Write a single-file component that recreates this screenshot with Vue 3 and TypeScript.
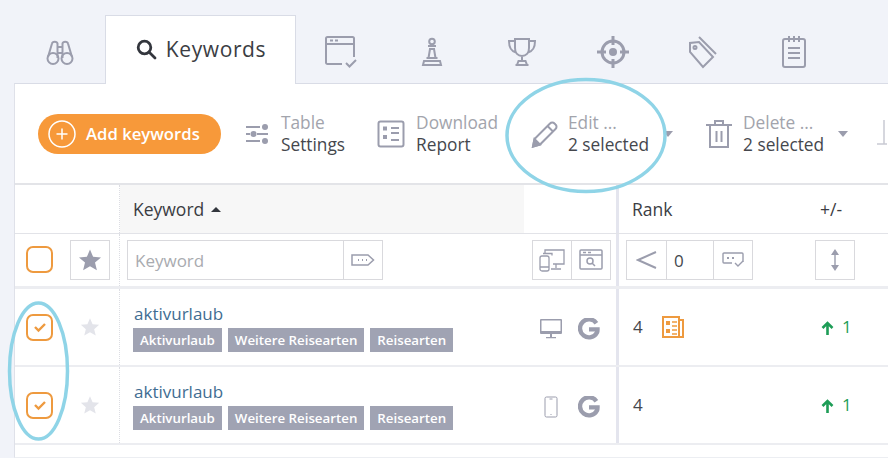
<template>
  <div class="page">
    <nav class="tabs">
      <span class="tab">
        <svg width="30" height="28" viewBox="0 0 30 28" fill="none" class="ic"><circle cx="8" cy="20.500" r="5.500"/><circle cx="22" cy="20.500" r="5.500"/><path d="M3 19 7 5.500C7.500 3 12 3 12.500 5.500V20M27 19 23 5.500C22.500 3 18 3 17.500 5.500V20M12.500 9h5M12.500 15h5"/></svg>
      </span>
      <span class="tab tab-active">
        <svg width="22" height="22" viewBox="0 0 22 22" fill="none" stroke="#33363d" stroke-width="2.800"><circle cx="9.500" cy="9.500" r="6.300"/><path d="m14 14 6 6" stroke-linecap="round"/></svg>
        Keywords
      </span>
      <span class="tab">
        <svg width="34" height="32" viewBox="0 0 34 32" fill="none" class="ic"><path d="M18 28H3.500A1.500 1.500 0 0 1 2 26.500V2.500A1.500 1.500 0 0 1 3.500 1h25A1.500 1.500 0 0 1 30 2.500V21M2 8h28M6 4.500h3M11 4.500h3"/><path d="m22 27 3.500 3.500L32 24"/></svg>
      </span>
      <span class="tab">
        <svg width="22" height="30" viewBox="0 0 22 30" fill="none" class="ic"><circle cx="11" cy="4.500" r="2.800"/><path d="M7 9h8M8 12h6M9 12l-1.500 9M13 12l1.500 9M5.500 21h11M3 24h16l1 4H2z"/></svg>
      </span>
      <span class="tab">
        <svg width="28" height="28" viewBox="0 0 28 28" fill="none" class="ic"><path d="M7 1h14v9c0 5-3 8-7 8s-7-3-7-8zM7 3H1c0 7 2 10 7 11.500M21 3h6c0 7-2 10-7 11.500M14 18v5M9 27l1.500-4h7L19 27zM7.500 27h13"/></svg>
      </span>
      <span class="tab">
        <svg width="34" height="34" viewBox="0 0 34 34" fill="none" class="ic ic-bold"><circle cx="17" cy="17" r="11"/><path d="M17 1v9M17 24v9M1 17h9M24 17h9"/><circle cx="17" cy="17" r="4" fill="#9b9dad" stroke="none"/></svg>
      </span>
      <span class="tab">
        <svg width="30" height="34" viewBox="0 0 30 34" fill="none" class="ic"><path d="M2 8v9l13 15 10-10L11 7zM11 2l17 17"/><circle cx="7" cy="12.500" r="1.500"/></svg>
      </span>
      <span class="tab">
        <svg width="26" height="34" viewBox="0 0 26 34" fill="none" class="ic"><path d="M4 4h18a2 2 0 0 1 2 2v24a2 2 0 0 1-2 2H4a2 2 0 0 1-2-2V6a2 2 0 0 1 2-2zM8 1v6M13 1v6M18 1v6M7 13h12M7 18h12M7 23h12"/></svg>
      </span>
    </nav>

    <main class="panel">
      <div class="toolbar">
        <button class="add-btn">
          <svg width="28" height="28" viewBox="0 0 28 28" fill="none" stroke="#fff" stroke-width="1.500"><circle cx="14" cy="14" r="13"/><path d="M14 8.500v11M8.500 14h11"/></svg>
          Add keywords
        </button>
        <div class="tool tool-table">
          <svg width="24" height="22" viewBox="0 0 24 22" fill="none" stroke="#9b9dad" stroke-width="2"><path d="M1 4h14M1 11h4M12 11h11M1 18h14"/><circle cx="20" cy="4" r="3" fill="#9b9dad" stroke="none"/><circle cx="8.500" cy="11" r="3" fill="#9b9dad" stroke="none"/><circle cx="20" cy="18" r="3" fill="#9b9dad" stroke="none"/></svg>
          <div class="tool-text"><span>Table</span><span>Settings</span></div>
        </div>
        <div class="tool tool-report">
          <svg width="28" height="28" viewBox="0 0 28 28" fill="none" stroke="#9b9dad" stroke-width="2"><rect x="1.500" y="1.500" width="25" height="25" rx="2"/><path d="M14 8h8M14 13h8M14 20h8"/><path d="M6 6.500h4v4H6zM6 15h4v4H6z" fill="#9b9dad" stroke="none"/></svg>
          <div class="tool-text"><span>Download</span><span>Report</span></div>
        </div>
        <div class="tool tool-edit">
          <svg width="28" height="28" viewBox="0 0 28 28" fill="none" stroke="#9b9dad" stroke-width="2"><path d="M2 26.500 3.500 19 19 3.500a3 3 0 0 1 4.500 0l1 1a3 3 0 0 1 0 4.500L9 24.500z"/><path d="m16.500 6 5.500 5.500"/><path d="M2 26.500 3.500 19l5.500 5.500z" fill="#9b9dad"/></svg>
          <div class="tool-text"><span>Edit ...</span><span>2 selected</span></div>
          <i class="caret caret-edit"></i>
        </div>
        <div class="tool tool-delete">
          <svg width="26" height="30" viewBox="0 0 26 30" fill="none" stroke="#9b9dad" stroke-width="2"><path d="M0 6h26M9 5V2h8v3M4 7v21h18V7M10.500 12v11M15.500 12v11"/></svg>
          <div class="tool-text"><span>Delete ...</span><span>2 selected</span></div>
          <i class="caret"></i>
        </div>
        <svg class="tool-next" width="10" height="28" viewBox="0 0 10 28" fill="none" stroke="#c9cad3" stroke-width="1.500"><path d="M7 0v24M0 24h10"/></svg>
      </div>

      <div class="row row-head">
        <div class="col-check"></div>
        <div class="col-keyword">
          <div class="head-sorted">Keyword <i class="sort-up"></i></div>
        </div>
        <div class="col-rank">Rank</div>
        <div class="col-change">+/-</div>
      </div>

      <div class="row row-filter">
        <div class="col-check">
          <span class="check"></span>
          <span class="box star-box">
            <svg width="24" height="24" viewBox="0 0 24 24"><path :d="STAR" fill="#9b9dad"/></svg>
          </span>
        </div>
        <div class="col-keyword">
          <input class="kw-input" placeholder="Keyword" />
          <span class="box tag-box">
            <svg width="24" height="14" viewBox="0 0 24 14" fill="none" stroke="#9b9dad" stroke-width="1.500"><path d="M1 2h16l5.500 5-5.500 5H1z"/><path d="M7 7h1M11 7h1M15 7h1" stroke-width="2"/></svg>
          </span>
          <span class="filter-right">
            <span class="box">
              <svg width="26" height="24" viewBox="0 0 26 24" fill="none" stroke="#9b9dad" stroke-width="1.300"><path d="M6 5V2h19v14H14M17 16v4M12 21h10"/><rect x="1" y="8" width="9" height="15" rx="2"/><path d="M4 5.500h9v2M1 19h9"/></svg>
            </span>
            <span class="box box-join">
              <svg width="24" height="22" viewBox="0 0 24 22" fill="none" stroke="#9b9dad" stroke-width="1.500"><rect x="1" y="1" width="22" height="19" rx="1"/><path d="M1 6h22M4 3.500h3M9 3.500h3"/><circle cx="11" cy="12" r="3"/><path d="m13 14 3 3"/></svg>
            </span>
          </span>
        </div>
        <div class="col-rank">
          <span class="box box-lt">
            <svg width="22" height="18" viewBox="0 0 22 18" fill="none" stroke="#9b9dad" stroke-width="2"><path d="M20 1 2 9l18 8"/></svg>
          </span>
          <span class="box box-num">0</span>
          <span class="box box-save">
            <svg width="22" height="16" viewBox="0 0 22 16" fill="none" stroke="#9b9dad" stroke-width="1.400"><path d="M10 11H2a1 1 0 0 1-1-1V2a1 1 0 0 1 1-1h18a1 1 0 0 1 1 1v8"/><path d="M5 6h2M10 6h2" stroke-width="2.200"/><path d="m13 11 3 3 5-5"/></svg>
          </span>
        </div>
        <div class="col-change">
          <span class="box">
            <svg width="10" height="22" viewBox="0 0 10 22" fill="#9b9dad"><path d="M5 0 9 6H1zM5 22 1 16h8zM4.300 5h1.400v12H4.300z"/></svg>
          </span>
        </div>
      </div>

      <div v-for="r in rows" :key="r.device" class="row row-data">
        <div class="col-check">
          <span class="check">
            <svg width="14" height="12" viewBox="0 0 14 12" fill="none" stroke="#ee9a3f" stroke-width="2.400"><path d="m2 6 3.500 3.500L12 3"/></svg>
          </span>
          <svg class="star" width="20" height="20" viewBox="0 0 24 24"><path :d="STAR" fill="#e3e4ea"/></svg>
        </div>
        <div class="col-keyword kw-cell">
          <div class="kw-main">
            <a class="kw-link">{{ r.keyword }}</a>
            <div class="tags"><span v-for="t in tags" :key="t" class="tag">{{ t }}</span></div>
          </div>
          <div class="kw-icons">
            <span class="device">
              <svg v-if="r.device === 'desktop'" width="22" height="20" viewBox="0 0 22 20" fill="#9b9dad"><path d="M1 0h20a1 1 0 0 1 1 1v13a1 1 0 0 1-1 1H1a1 1 0 0 1-1-1V1a1 1 0 0 1 1-1zm.500 1.500V12h19V1.500zM10 15h2v3h-2zM6 18h10v1.200H6z"/></svg>
              <svg v-else width="14" height="22" viewBox="0 0 14 22" fill="none" stroke="#9b9dad" stroke-width="1"><rect x="1" y="1" width="12" height="20" rx="1.500"/><path d="M5.500 3h3M6.500 18.500h1"/></svg>
            </span>
            <svg width="22" height="22" viewBox="0 0 22 22" fill="none" stroke="#9b9dad" stroke-width="4.400"><path d="M18.400 5.200A9 9 0 1 0 19 14.500c.3-.8.500-1.600.500-3.100H11"/></svg>
          </div>
        </div>
        <div class="col-rank rank-cell">
          <span>4</span>
          <svg v-if="r.serp" class="serp" width="22" height="22" viewBox="0 0 22 22" fill="none" stroke="#ee9a3f" stroke-width="2"><path d="M1 1h16v20H1zM17 4h4v17H3"/><path d="M4 5h4v4H4zM4 13h4v4H4z" fill="#ee9a3f" stroke="none"/><path d="M10 6h5M10 10h5M10 14h5M10 18h5" stroke-width="1.600"/></svg>
        </div>
        <div class="col-change change-cell">
          <svg width="13" height="14" viewBox="0 0 13 14" fill="none" stroke="#1e9d57" stroke-width="2.600"><path d="M1.500 7l5-5 5 5M6.500 2v12"/></svg>
          <span>1</span>
        </div>
      </div>
    </main>

    <!-- Hand-drawn highlight circles sit above the table -->
    <svg class="marks" width="888" height="458" viewBox="0 0 888 458" fill="none" stroke="#8fd4e7" stroke-width="3.500">
      <ellipse cx="586" cy="135.500" rx="79" ry="56"/>
      <ellipse cx="38.500" cy="371" rx="29" ry="68"/>
    </svg>
  </div>
</template>

<script setup lang="ts">
interface KeywordRow {
  keyword: string
  device: 'desktop' | 'mobile'
  serp: boolean
}

const STAR = 'M12 1.500l3.100 7.300 7.900.6-6 5.200 1.900 7.700L12 18.200l-6.900 4.100L7 14.600 1 9.400l7.900-.6z'

const tags = ['Aktivurlaub', 'Weitere Reisearten', 'Reisearten']

const rows: KeywordRow[] = [
  { keyword: 'aktivurlaub', device: 'desktop', serp: true },
  { keyword: 'aktivurlaub', device: 'mobile', serp: false },
]
</script>

<style>
body {
  background: #f1f3f9;
}
</style>

<style scoped>
.page {
  position: relative;
  width: 888px;
  height: 458px;
  overflow: hidden;
  background: #f1f3f9;
  font-family: 'Open Sans', sans-serif;
  color: #45474d;
}

/* tabs */
.tabs {
  display: flex;
  align-items: flex-end;
  height: 83px;
  padding-left: 14.500px;
}

.tab {
  flex: 0 0 90.500px;
  height: 68px;
  display: flex;
  align-items: center;
  justify-content: center;
  padding-top: 5px;
  box-sizing: border-box;
}

.tab-active {
  flex-basis: 191px;
  gap: 9px;
  background: #fff;
  border: 1px solid #d9dce6;
  border-bottom: 0;
  padding: 0 0 3px;
  font-size: 21px;
  letter-spacing: 0.6px;
  color: #3b3d43;
  position: relative;
  z-index: 1;
  height: 69px;
  margin-bottom: -1px;
}

.ic {
  stroke: #9b9dad;
  stroke-width: 2;
}

.ic-bold {
  stroke-width: 3;
}

/* panel */
.panel {
  margin-left: 14px;
  background: #fff;
  border-top: 1px solid #d9dce6;
  border-left: 1px solid #dfe1e9;
  border-bottom: 1px solid #eceef2;
  height: 375px;
  box-sizing: border-box;
}

.toolbar {
  display: flex;
  align-items: center;
  height: 101px;
  padding-left: 23px;
  border-bottom: 2px solid #e3e4e8;
  box-sizing: border-box;
  white-space: nowrap;
}

.add-btn {
  flex: none;
  display: flex;
  align-items: center;
  gap: 10px;
  width: 183px;
  height: 40px;
  padding: 0 0 0 10px;
  border: 0;
  border-radius: 20px;
  background: #f7993a;
  color: #fff;
  font: 600 16.700px 'Open Sans', sans-serif;
}

.tool {
  flex: none;
  display: flex;
  align-items: center;
}

.tool-table {
  margin-left: 24px;
  gap: 12px;
}

.tool-report {
  margin-left: 32px;
  gap: 11px;
}

.tool-edit {
  margin-left: 33px;
  gap: 9px;
}

.tool-delete {
  margin-left: 33px;
  gap: 11px;
}

.tool-text {
  display: flex;
  flex-direction: column;
  font-size: 17.300px;
  line-height: 22px;
}

.tool-text span:first-child {
  color: #a2a4ac;
}

.caret {
  width: 0;
  height: 0;
  margin-left: 3px;
  border: 5px solid transparent;
  border-top: 6px solid #9b9dad;
  border-bottom: 0;
}

.caret-edit {
  margin-left: 5px;
}

.tool-next {
  flex: none;
  margin-left: 29px;
}

/* table */
.row {
  display: flex;
  box-sizing: border-box;
}

.row-head {
  height: 49px;
  border-bottom: 1px solid #e2e3e8;
  font-size: 17.500px;
  color: #3b3d43;
}

.row-filter {
  height: 55px;
  border-bottom: 3px solid #ecedf1;
}

.row-data {
  height: 78px;
  border-bottom: 2px solid #ecedf1;
}

.col-check {
  flex: 0 0 105px;
  display: flex;
  align-items: center;
  box-sizing: border-box;
  border-right: 1px dotted #dcdde3;
}

.col-keyword {
  flex: 0 0 499px;
  display: flex;
  align-items: center;
  box-sizing: border-box;
  border-right: 3px solid #e4e5ee;
}

.col-rank {
  flex: 0 0 196px;
  display: flex;
  align-items: center;
  box-sizing: border-box;
}

.col-change {
  flex: 1;
  display: flex;
  align-items: center;
}

.row-head .col-keyword {
  align-items: stretch;
}

.head-sorted {
  display: flex;
  align-items: center;
  gap: 7px;
  width: 404px;
  padding-left: 13px;
  box-sizing: border-box;
  background: #f7f7f7;
}

.sort-up {
  width: 0;
  height: 0;
  border: 5px solid transparent;
  border-bottom: 5px solid #33363d;
  border-top: 0;
}

.row-head .col-rank {
  padding-left: 13px;
}

.row-head .col-change {
  padding-left: 5px;
}

.row-filter .col-check {
  padding-bottom: 1px;
}

.check {
  flex: none;
  width: 27px;
  height: 27px;
  margin-left: 11px;
  display: flex;
  align-items: center;
  justify-content: center;
  border: 2.500px solid #ee9a3f;
  border-radius: 7px;
  box-sizing: border-box;
}

.box {
  flex: none;
  width: 40px;
  height: 40px;
  display: flex;
  align-items: center;
  justify-content: center;
  border: 1px solid #d9d9dd;
  box-sizing: border-box;
}

.star-box {
  margin-left: 17px;
}

.row-filter .col-keyword {
  padding-left: 7px;
}

.kw-input {
  width: 217px;
  height: 40px;
  padding: 0 7px;
  border: 1px solid #d9d9dd;
  box-sizing: border-box;
  outline: none;
  font: 17px 'Open Sans', sans-serif;
}

.kw-input::placeholder {
  color: #a9abb0;
}

.tag-box {
  margin-left: -1px;
}

.filter-right {
  display: flex;
  margin-left: 149px;
}

.box-join {
  margin-left: -1px;
}

.row-filter .col-rank {
  padding-left: 7px;
}

.box-lt {
  width: 41px;
}

.box-num {
  width: 48px;
  margin: 0 -1px;
  justify-content: flex-start;
  padding-left: 7px;
  font-size: 17px;
}

.star {
  margin-left: 27px;
}

.kw-cell {
  padding: 13px 0 0 14px;
  align-items: flex-start;
  justify-content: space-between;
}

.kw-main {
  flex: 1;
}

.kw-link {
  display: block;
  font-size: 17px;
  line-height: 24px;
  color: #3f6d92;
}

.tags {
  display: flex;
  gap: 6px;
  margin-top: 2px;
  margin-left: -1px;
}

.tag {
  height: 24px;
  line-height: 24px;
  padding: 0 7px;
  background: #a0a3b3;
  color: #fff;
  font-size: 13.300px;
  font-weight: 600;
}

.kw-icons {
  display: flex;
  align-items: center;
  gap: 16px;
  width: 76px;
  flex: none;
  margin-top: 16px;
}

.device {
  width: 22px;
  display: flex;
  justify-content: center;
}

.rank-cell {
  align-items: flex-start;
  padding: 26px 0 0 14px;
  font-size: 17px;
  line-height: 24px;
  gap: 19px;
}

.serp {
  margin-top: 1px;
}

.change-cell {
  align-items: flex-start;
  gap: 8px;
  padding: 26px 0 0 6px;
  font-size: 17px;
  line-height: 24px;
  color: #1e9d57;
}

.change-cell svg {
  margin-top: 6px;
}

.marks {
  position: absolute;
  left: 0;
  top: 0;
  z-index: 2;
  pointer-events: none;
}
</style>
